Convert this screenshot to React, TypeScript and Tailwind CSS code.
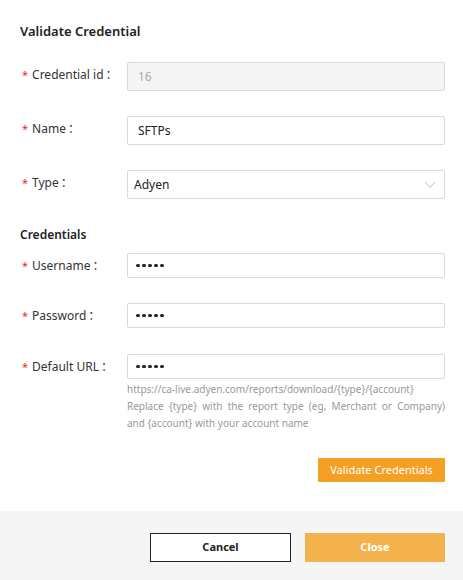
import React from "react";

function Label({ text }: { text: string }) {
  return (
    <div className="w-[107px] shrink-0 flex items-start pt-[4px] text-[12px] text-[#333] leading-[18px]">
      <span className="text-[#f5222d] text-[11px] mr-[4px] ml-[2px]">*</span>
      <span>{text}</span>
      <span className="ml-[2px]">：</span>
    </div>
  );
}

function Dots() {
  return (
    <span className="flex items-center gap-[2.5px]">
      {[0, 1, 2, 3, 4].map((i) => (
        <span key={i} className="w-[3.5px] h-[3.5px] rounded-full bg-[#222] inline-block" />
      ))}
    </span>
  );
}

export default function App() {
  return (
    <div className="w-[463px] h-[580px] bg-white flex flex-col" style={{ fontFamily: '"Noto Sans", "Open Sans", "Noto Sans CJK SC", sans-serif' }}>
      <div className="flex-1 pl-[20px] pr-[18px]">
        <div className="pt-[21px] text-[13px] font-semibold text-[#222] leading-[20px]">Validate Credential</div>

        <div className="flex mt-[21px]">
          <Label text="Credential id" />
          <div className="flex-1 h-[29px] border border-[#d9d9d9] bg-[#f5f5f5] rounded-[2px] flex items-center px-[10px] text-[12px] text-[#aaa]">16</div>
        </div>

        <div className="flex mt-[25px]">
          <Label text="Name" />
          <div className="flex-1 h-[29px] border border-[#d9d9d9] rounded-[2px] flex items-center px-[10px] text-[12px] text-[#222]">SFTPs</div>
        </div>

        <div className="flex mt-[25px]">
          <Label text="Type" />
          <div className="flex-1 h-[29px] border border-[#d9d9d9] rounded-[2px] flex items-center justify-between pl-[6px] pr-[8px] text-[12px] text-[#222]">
            <span>Adyen</span>
            <svg width="12" height="8" viewBox="0 0 12 8" fill="none">
              <path d="M1 1 L6 6.5 L11 1" stroke="#bbb" strokeWidth="1" />
            </svg>
          </div>
        </div>

        <div className="mt-[27px] text-[12px] font-semibold text-[#222] leading-[18px]">Credentials</div>

        <div className="flex mt-[9px]">
          <Label text="Username" />
          <div className="flex-1 h-[25px] border border-[#d9d9d9] rounded-[2px] flex items-center px-[8px]"><Dots /></div>
        </div>

        <div className="flex mt-[25px]">
          <Label text="Password" />
          <div className="flex-1 h-[25px] border border-[#d9d9d9] rounded-[2px] flex items-center px-[8px]"><Dots /></div>
        </div>

        <div className="flex mt-[26px]">
          <Label text="Default URL" />
          <div className="flex-1">
            <div className="h-[25px] border border-[#d9d9d9] rounded-[2px] flex items-center px-[8px]"><Dots /></div>
            <div className="mt-[2px] text-[10px] leading-[17px] text-[#999]">
              <div>https://ca-live.adyen.com/reports/download/{"{type}"}/{"{account}"}</div>
              <div className="text-justify [text-align-last:justify]">Replace {"{type}"} with the report type (eg, Merchant or Company)</div>
              <div>and {"{account}"} with your account name</div>
            </div>
          </div>
        </div>

        <div className="flex justify-end mt-[26px]">
          <button className="w-[127px] h-[24px] bg-[#f5a024] text-white text-[11px] rounded-[1px]">Validate Credentials</button>
        </div>
      </div>

      <div className="h-[69px] bg-[#f5f5f5] flex items-start justify-end pt-[22px] pr-[18px] gap-[14px]">
        <button className="w-[141px] h-[29px] border border-[#222] bg-white text-[11px] font-bold text-[#222]">Cancel</button>
        <button className="w-[140px] h-[29px] bg-[#f3b24b] text-[11px] font-bold text-white">Close</button>
      </div>
    </div>
  );
}
